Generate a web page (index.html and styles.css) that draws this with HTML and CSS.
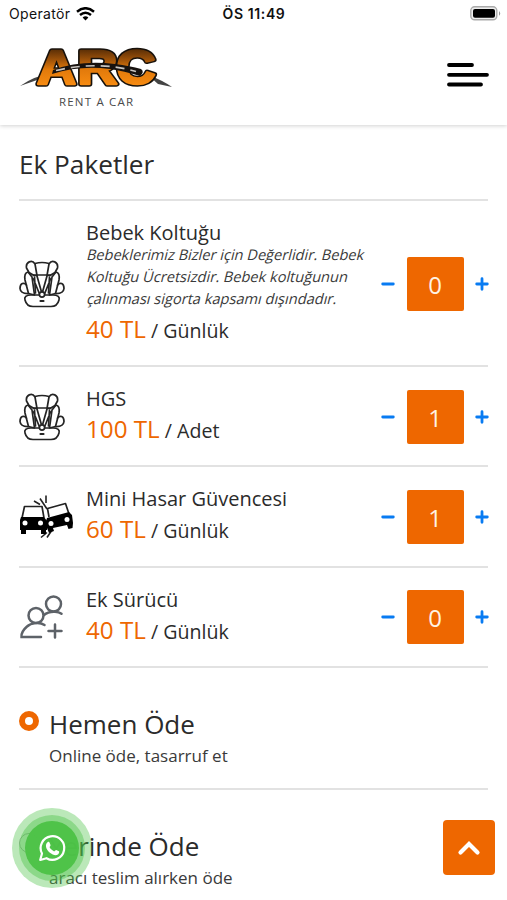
FILE: index.html
```html
<!DOCTYPE html>
<html lang="tr">
<head>
<meta charset="utf-8">
<meta name="viewport" content="width=device-width, initial-scale=1">
<title>ARC Rent A Car</title>
<link rel="stylesheet" href="styles.css">
</head>
<body>
<svg class="defs" aria-hidden="true">
  <symbol id="seat" viewBox="0 0 46 48">
    <g fill="none" stroke="#242424" stroke-width="1.7" stroke-linejoin="round" stroke-linecap="round">
      <path d="M16 3.500Q23 1.500 30 3.500M14.500 15h17"/>
      <path d="M16 4C13-1 6.500 2 7.500 8L10 12.500 15 15.500H18Z"/>
      <path d="M30 4C33-1 39.500 2 38.500 8L36 12.500 31 15.500H28Z"/>
      <path d="M9 12C5 13 5.500 17 6 20l3.500 13.500 6 1.500-2.500-18Z"/>
      <path d="M37 12c4 1 3.500 5 3 8l-3.500 13.500-6 1.500 2.500-18Z"/>
      <path d="M10 33.500Q1.500 34 1 28.500C1 23 5 22 7.500 25M36 33.500Q44.500 34 45 28.500C45 23 41 22 38.500 25"/>
      <path d="M15.500 17l1 16M18 16l4.500 16M14.500 19l6 15M30.500 17l-1 16M28 16l-4.500 16M31.500 19l-6 15"/>
      <path d="M12 35h22c5 0 7 2 6 5-1 4-4 6.500-8 6.500H14c-4 0-7-2.500-8-6.500-1-3 1-5 6-5Z"/>
      <circle cx="23" cy="34.500" r="2.600" fill="#fff"/>
      <path d="M21.500 41h3" stroke-width="2.200"/>
    </g>
  </symbol>
  <symbol id="minus" viewBox="0 0 14 14"><path d="M1.700 7h10.600" stroke="#087bf2" stroke-width="2.800" stroke-linecap="round"/></symbol>
  <symbol id="plus" viewBox="0 0 14 14"><path d="M1.700 7h10.600M7 1.700v10.600" stroke="#087bf2" stroke-width="2.800" stroke-linecap="round"/></symbol>
</svg>

<header class="top">
  <div class="status">
    <div class="carrier"><span>Operatör</span>
      <svg width="19" height="14" viewBox="0 0 19 14" fill="none" stroke="#000" stroke-width="2.500"><path d="M1 4.700Q9.500-2.200 18 4.700M4 8Q9.500 3.500 15 8"/><path d="M6.600 10.400Q9.500 8.200 12.400 10.400L9.500 13.500Z" fill="#000" stroke="none"/></svg>
    </div>
    <span class="clock">ÖS 11:49</span>
    <svg class="battery" width="31" height="15" viewBox="0 0 31 15"><rect x=".8" y=".8" width="26" height="13" rx="3.800" fill="#eee" stroke="#aaa" stroke-width="1.400"/><rect x="3" y="3" width="22" height="8.800" rx="2"/><path d="M29 5q2.400 2.400 0 4.800Z" fill="#999"/></svg>
  </div>
  <div class="brandbar">
    <svg class="logo" width="156" height="70" viewBox="0 0 156 70" role="img" aria-label="ARC Rent A Car">
      <defs>
        <linearGradient id="amber" gradientUnits="userSpaceOnUse" x1="0" y1="3" x2="0" y2="44"><stop offset="0" stop-color="#3f2005"/><stop offset=".35" stop-color="#9a5009"/><stop offset=".6" stop-color="#e27a0b"/><stop offset="1" stop-color="#f88c12"/></linearGradient>
      </defs>
      <path d="M2 44Q16 34 34 31L22 37Z" fill="#444"/>
      <path d="M154 45Q144 38 130 33L140 42Z" fill="#444"/>
      <g class="arc">
        <text class="edge" x="19" y="41.500" textLength="39" lengthAdjust="spacingAndGlyphs">A</text>
        <text class="face" x="19" y="41.500" textLength="39" lengthAdjust="spacingAndGlyphs" aria-hidden="true">A</text>
        <text class="edge" x="59.500" y="41.500" textLength="40" lengthAdjust="spacingAndGlyphs">R</text>
        <text class="face" x="59.500" y="41.500" textLength="40" lengthAdjust="spacingAndGlyphs" aria-hidden="true">R</text>
        <text class="edge" x="98.500" y="41.500" textLength="39" lengthAdjust="spacingAndGlyphs">C</text>
        <text class="face" x="98.500" y="41.500" textLength="39" lengthAdjust="spacingAndGlyphs" aria-hidden="true">C</text>
      </g>
      <path d="M35 28Q62 18 97 22Q112 24 123 27Q127 30 122 34Q106 29 92 27Q62 23 34 32Z" fill="#17120f"/>
      <path d="M38 28.500Q80 18.500 118 29.500" fill="none" stroke="#c9c5c0" stroke-width="1.700" stroke-dasharray="9 6"/>
      <text class="tagline" x="41" y="63.500" textLength="74">RENT A CAR</text>
    </svg>
    <svg class="burger" width="44" height="26" viewBox="0 0 44 26"><path d="M3 3h23M3 12.800h38M3 22.500h32" stroke="#000" stroke-width="3.800" stroke-linecap="round"/></svg>
  </div>
</header>

<main class="content">
  <h1 class="title">Ek Paketler</h1>
  <section class="packages">
    <article class="package">
      <svg class="seat" width="46" height="48"><use href="#seat"/></svg>
      <div class="info">
        <h2 class="name">Bebek Koltuğu</h2>
        <p class="note"><span>Bebeklerimiz Bizler için Değerlidir. Bebek</span> <span>Koltuğu Ücretsizdir. Bebek koltuğunun</span> <span>çalınması sigorta kapsamı dışındadır.</span></p>
        <p class="price"><strong>40 TL</strong> / Günlük</p>
      </div>
      <div class="counter"><svg><use href="#minus"/></svg><span class="qty">0</span><svg><use href="#plus"/></svg></div>
    </article>
    <article class="package">
      <svg class="seat" width="46" height="48"><use href="#seat"/></svg>
      <div class="info">
        <h2 class="name">HGS</h2>
        <p class="price"><strong>100 TL</strong> / Adet</p>
      </div>
      <div class="counter"><svg><use href="#minus"/></svg><span class="qty">1</span><svg><use href="#plus"/></svg></div>
    </article>
    <article class="package">
      <svg class="crash" width="56" height="44" viewBox="0 0 56 44">
        <g fill="none" stroke="#222" stroke-width="1.700">
          <path d="M3 23L5.500 11.500H23L25 23M30 22L28.500 13.500 46.500 8.500 50 19" stroke-linejoin="round"/>
          <path d="M15 6l6 3.500M21 3.500L28 14M27 .5V8M22 42.500l6-5M28 42.500l4-6" stroke-width="1.600"/>
        </g>
        <path d="M2 22h23l3 4v9h-1v4h-5v-4H7v4H2v-4H1V25Z"/>
        <path d="M28 23l22-6 3 3 1 8-.5 5-4 1-1.500-4-14 3 1 3-5 2-2-5-2-4Z"/>
        <g fill="#fff"><circle cx="6" cy="28" r="2.500"/><circle cx="21.500" cy="28" r="2.500"/><circle cx="32" cy="28.500" r="2.500"/><circle cx="48" cy="24.500" r="2.500"/></g>
      </svg>
      <div class="info">
        <h2 class="name">Mini Hasar Güvencesi</h2>
        <p class="price"><strong>60 TL</strong> / Günlük</p>
      </div>
      <div class="counter"><svg><use href="#minus"/></svg><span class="qty">1</span><svg><use href="#plus"/></svg></div>
    </article>
    <article class="package">
      <svg class="people" width="46" height="44" viewBox="0 0 46 44" fill="none" stroke="#5d6268" stroke-width="2.500" stroke-linecap="round">
        <circle cx="34.500" cy="9" r="7.500"/><circle cx="17" cy="20.500" r="7.500"/>
        <path d="M25 20Q29 16.500 36 16.800 40 17 42.500 18.800M25.500 30C21 27 12 27.500 8 31.500 4 35 2 38 2.500 42H22M36 29.500V42.500M29.500 36H42.500"/>
      </svg>
      <div class="info">
        <h2 class="name">Ek Sürücü</h2>
        <p class="price"><strong>40 TL</strong> / Günlük</p>
      </div>
      <div class="counter"><svg><use href="#minus"/></svg><span class="qty">0</span><svg><use href="#plus"/></svg></div>
    </article>
  </section>
  <section class="payments">
    <div class="payment">
      <span class="radio checked"></span>
      <div><h2 class="method">Hemen Öde</h2><p class="hint">Online öde, tasarruf et</p></div>
    </div>
    <div class="payment">
      <span class="radio"></span>
      <div><h2 class="method">Yerinde Öde</h2><p class="hint">aracı teslim alırken öde</p></div>
    </div>
  </section>
</main>

<div class="whatsapp">
  <svg width="80" height="80" viewBox="0 0 80 80">
    <circle cx="40" cy="40" r="40" fill="#4dc247" opacity=".38"/>
    <circle cx="40" cy="40" r="33" fill="#4dc247" opacity=".42"/>
    <circle cx="40" cy="40" r="27" fill="#4dc247" opacity=".97"/>
    <path d="M28.200 52L30 45.500A11.800 11.800 0 1 1 34.500 50.200Z" fill="none" stroke="#fff" stroke-width="2.200" stroke-linejoin="round"/>
    <path d="M35.500 34.300c.8-.7 1.700-.6 2 .2l1 2.400c.3.700-.8 1.600-1 2.200 1 2 2.700 3.500 4.700 4.300.7-.2 1.300-1.600 2-1.400l2.700 1.300c.7.400.1 2.200-.7 2.900-1.500 1.300-3.500 1.100-5.500.2-2.800-1.200-5-3.500-6.300-6.200-.8-2-.7-4.300 1.100-5.900Z" fill="#fff"/>
  </svg>
</div>
<div class="to-top"><svg width="26" height="18" viewBox="0 0 26 18"><path d="M4.500 13.500L13 5l8.500 8.500" fill="none" stroke="#fff" stroke-width="4.200" stroke-linecap="round" stroke-linejoin="miter"/></svg></div>
</body>
</html>
```

FILE: styles.css
```css
* { box-sizing: border-box; }
body {
  margin: 0;
  height: 900px;
  overflow: hidden;
  background: #fff;
  color: #2b2b2b;
  font-family: "Open Sans", "Noto Sans", sans-serif;
}
h1, h2, p { margin: 0; font-weight: 400; }
svg { display: block; flex: none; }
.defs { position: absolute; width: 0; height: 0; }

.top {
  height: 125px;
  background: #fff;
  box-shadow: 0 1px 4px rgba(0, 0, 0, .18);
}
.status {
  display: grid;
  grid-template-columns: 1fr auto 1fr;
  align-items: center;
  height: 27px;
  padding: 0 6px 0 9px;
  font: 14px/18px Inter, sans-serif;
  color: #111;
}
.carrier { display: flex; align-items: center; gap: 6px; letter-spacing: .35px; }
.clock { font-weight: 600; letter-spacing: .6px; transform: translateX(-1px); }
.battery { justify-self: end; }
.brandbar {
  display: flex;
  justify-content: space-between;
  align-items: flex-start;
  padding: 15px 17px 0 18px;
}
.logo { overflow: visible; }
.arc { font: bold 48px "Liberation Sans", sans-serif; stroke-linejoin: round; }
.edge { fill: #17110b; stroke: #17110b; stroke-width: 5.500px; }
.face { fill: url(#amber); stroke: url(#amber); stroke-width: 2.600px; }
.tagline { font: 500 11.500px "Open Sans", sans-serif; fill: #4a4a4a; }
.burger { margin-top: 20px; }

.content { padding: 0 19px; }
.title {
  height: 76px;
  padding-top: 19px;
  border-bottom: 2px solid #e2e2e2;
  font-size: 26.200px;
  line-height: 40px;
}
.package {
  display: grid;
  grid-template-columns: 67px 1fr auto;
  align-items: center;
  padding: 20px 0 16.200px;
  border-bottom: 2px solid #e2e2e2;
}
.package > svg { margin-bottom: 3px; }
.name { font-size: 20px; line-height: 24px; white-space: nowrap; }
.note {
  margin: -2px 0 2px;
  font-size: 14.600px;
  line-height: 22px;
  white-space: nowrap;
  color: #3a3a3a;
}
.note span {
  display: block;
  transform: skewX(-14deg);
  transform-origin: 0 75%;
}
.info { min-width: 0; }
.price { font-size: 19.600px; line-height: 36px; white-space: nowrap; }
.price strong { font-size: 24.200px; font-weight: 400; color: #ee6700; }
.counter {
  display: flex;
  align-items: center;
  gap: 11.500px;
  margin: 0 -1px 3px 0;
}
.counter svg { width: 14px; height: 14px; }
.qty {
  width: 57px;
  height: 54px;
  border-radius: 2px;
  background: #ee6700;
  color: #fff3e4;
  font-size: 24px;
  line-height: 55px;
  text-align: center;
}

.payment {
  display: flex;
  gap: 10px;
  height: 122px;
  padding-top: 36px;
  border-bottom: 2px solid #e2e2e2;
}
.radio {
  flex: none;
  width: 20px;
  height: 20px;
  margin-top: 7px;
  border: 1px solid #aaa;
  border-radius: 50%;
}
.radio.checked { border: 6.500px solid #ee6700; }
.method { font-size: 26px; line-height: 40px; }
.hint { font-size: 17px; line-height: 24px; color: #3a3a3a; }

.whatsapp { position: fixed; left: 12px; top: 808px; }
.to-top {
  position: fixed;
  left: 443px;
  top: 820px;
  display: grid;
  place-items: center;
  width: 52px;
  height: 55px;
  border-radius: 4px;
  background: #ee6700;
}
```
